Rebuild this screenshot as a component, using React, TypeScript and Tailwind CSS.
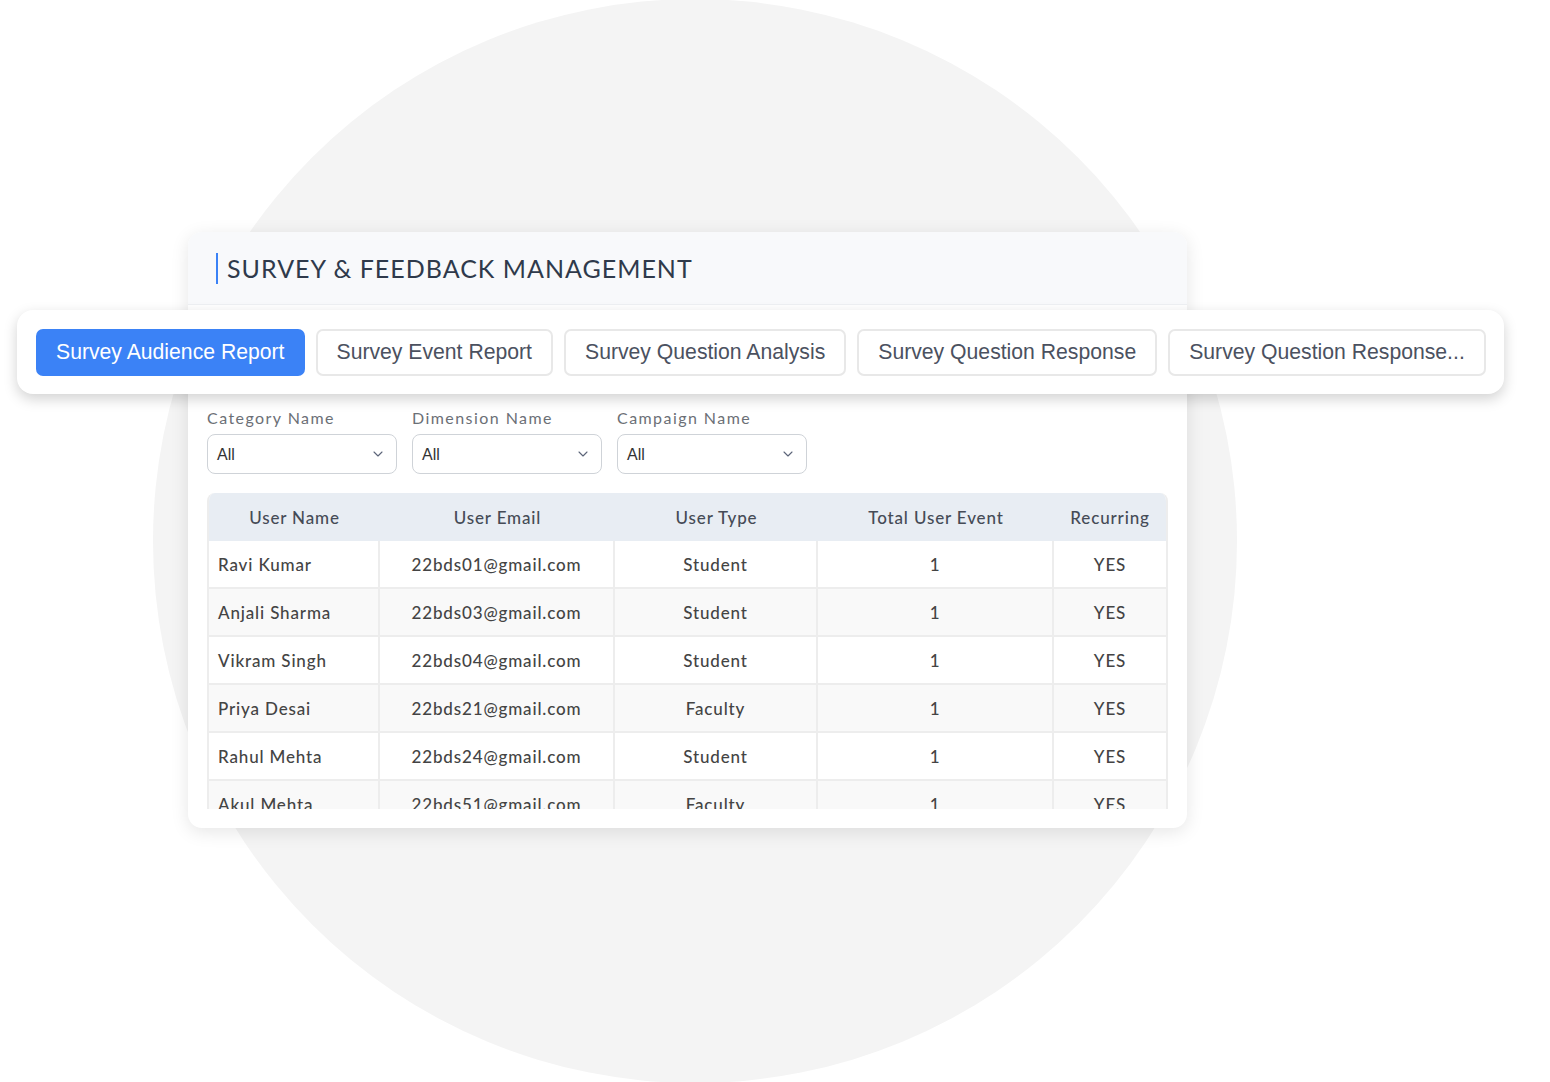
import { ChevronDown } from 'lucide-react';

type Row = {
  name: string;
  email: string;
  type: string;
  total: number;
  recurring: string;
};

const rows: Row[] = [
  { name: 'Ravi Kumar', email: '22bds01@gmail.com', type: 'Student', total: 1, recurring: 'YES' },
  { name: 'Anjali Sharma', email: '22bds03@gmail.com', type: 'Student', total: 1, recurring: 'YES' },
  { name: 'Vikram Singh', email: '22bds04@gmail.com', type: 'Student', total: 1, recurring: 'YES' },
  { name: 'Priya Desai', email: '22bds21@gmail.com', type: 'Faculty', total: 1, recurring: 'YES' },
  { name: 'Rahul Mehta', email: '22bds24@gmail.com', type: 'Student', total: 1, recurring: 'YES' },
  { name: 'Akul Mehta', email: '22bds51@gmail.com', type: 'Faculty', total: 1, recurring: 'YES' },
];

const tabs = [
  'Survey Audience Report',
  'Survey Event Report',
  'Survey Question Analysis',
  'Survey Question Response',
  'Survey Question Response...',
];

const filters = ['Category Name', 'Dimension Name', 'Campaign Name'];

const geo = "font-['Lato','Open_Sans',sans-serif]";

export default function App() {
  return (
    <div className="relative w-[1550px] h-[1082px] overflow-hidden bg-white">
      {/* backdrop circle */}
      <div className="absolute left-[153px] top-[-1px] w-[1084px] h-[1084px] rounded-full bg-[#f4f4f4]" />

      <div className={`relative ml-[188px] mt-[232px] w-[999px] h-[596px] rounded-[14px] bg-white shadow-[0_4px_18px_rgba(0,0,0,0.10)] ${geo}`}>
        {/* header */}
        <div className="h-[73px] rounded-t-[14px] bg-[#f8f9fb] border-b border-[#eef0f3] flex items-center pl-[28px]">
          <div className="w-[2px] h-[31px] bg-[#3b82f6] mr-[9px]" />
          <h1 className="text-[25px] leading-none tracking-[0.04em] text-[#2f3a4b]">SURVEY &amp; FEEDBACK MANAGEMENT</h1>
        </div>

        {/* tab bar */}
        <div className="relative z-10 mt-[5px] ml-[-171px] mr-[-317px] h-[84px] rounded-[16px] bg-white shadow-[0_5px_14px_rgba(0,0,0,0.18)] flex items-center gap-[11px] pl-[19px] pr-[20px] font-['Liberation_Sans',Arial,sans-serif]">
          {tabs.map((t, i) => (
            <button
              key={t}
              className={
                i === 0
                  ? 'shrink-0 whitespace-nowrap h-[47px] px-[20px] rounded-[7px] bg-[#3b82f6] text-white text-[21.2px]'
                  : 'shrink-0 whitespace-nowrap h-[47px] px-[19px] rounded-[7px] border-2 border-[#e8e8e8] bg-white text-[#4b5160] text-[21.2px]'
              }
            >
              {t}
            </button>
          ))}
        </div>

        {/* filters */}
        <div className="flex gap-[15px] px-[19px] mt-[14px]">
          {filters.map((f) => (
            <div key={f} className="flex flex-col">
              <span className="text-[16px] leading-[20px] text-[#6b6f76] tracking-[0.09em]">{f}</span>
              <div className="mt-[6px] w-[190px] h-[40px] rounded-[8px] border border-[#cfd3d8] flex items-center justify-between pl-[9px] pr-[10px]">
                <span className="text-[16px] text-[#333] pt-[2px] font-['Liberation_Sans',Arial,sans-serif]">All</span>
                <ChevronDown size={16} strokeWidth={1.6} className="text-[#5b6478]" />
              </div>
            </div>
          ))}
        </div>

        {/* table */}
        <div className="mx-[19px] mt-[19px] h-[316px] overflow-hidden rounded-t-[8px] border-x-2 border-[#ededed]">
          <div className="grid grid-cols-[171px_235px_203px_236px_1fr] h-[48px] bg-[#e8edf3] text-[17px] font-medium tracking-[0.05em] text-[#454b56]">
            {['User Name', 'User Email', 'User Type', 'Total User Event', 'Recurring'].map((h) => (
              <div key={h} className="flex items-center justify-center pt-[1px]">{h}</div>
            ))}
          </div>
          {rows.map((r, i) => (
            <div
              key={r.email}
              className={`grid grid-cols-[171px_235px_203px_236px_1fr] h-[48px] border-b-2 border-[#ededed] text-[17px] font-medium tracking-[0.05em] text-[#444] ${i % 2 === 1 ? 'bg-[#f9f9f9]' : 'bg-white'}`}
            >
              <div className="flex items-center pl-[9px] pt-[2px] border-r-2 border-[#ededed]">{r.name}</div>
              <div className="flex items-center justify-center pt-[2px] border-r-2 border-[#ededed]">{r.email}</div>
              <div className="flex items-center justify-center pt-[2px] border-r-2 border-[#ededed]">{r.type}</div>
              <div className="flex items-center justify-center pt-[2px] border-r-2 border-[#ededed]">{r.total}</div>
              <div className="flex items-center justify-center pt-[2px]">{r.recurring}</div>
            </div>
          ))}
        </div>
      </div>
    </div>
  );
}
